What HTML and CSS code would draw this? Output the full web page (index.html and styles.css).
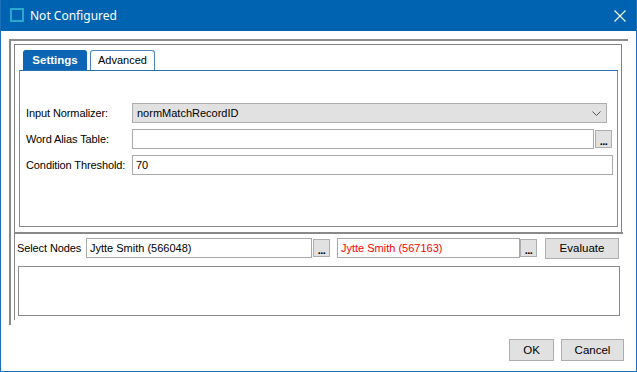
FILE: index.html
```html
<!DOCTYPE html>
<html>
<head>
  <title>Not Configured</title>
  <link rel="stylesheet" href="styles.css">
</head>
<body>
  <div class="window">
    <div class="titlebar">
      <span class="app-icon"></span>
      <span class="title">Not Configured</span>
      <svg class="close-btn" width="12" height="12" viewBox="0 0 12 12">
        <path d="M0.5 0.5 L11.5 11.5 M11.5 0.5 L0.5 11.5" stroke="#fff" stroke-width="1.1" fill="none"/>
      </svg>
    </div>

    <div class="client">
      <div class="frame-outer">
        <div class="frame-inner">
          <div class="upper-pane">
            <div class="tabs">
              <div class="tab active">Settings</div>
              <div class="tab">Advanced</div>
            </div>
            <div class="tab-panel">
              <div class="form-row">
                <label>Input Normalizer:</label>
                <div class="combo">
                  <span>normMatchRecordID</span>
                  <svg class="chevron" width="9" height="5" viewBox="0 0 9 5">
                    <path d="M0.5 0.5 L4.5 4.5 L8.5 0.5" stroke="#555" stroke-width="1" fill="none"/>
                  </svg>
                </div>
              </div>
              <div class="form-row">
                <label>Word Alias Table:</label>
                <div class="text-box alias-box"></div>
                <div class="dots-btn">...</div>
              </div>
              <div class="form-row">
                <label>Condition Threshold:</label>
                <div class="text-box threshold-box">70</div>
              </div>
            </div>
          </div>

          <div class="lower-pane">
            <div class="nodes-row">
              <label class="nodes-label">Select Nodes</label>
              <div class="text-box node-box first">Jytte Smith (566048)</div>
              <div class="dots-btn">...</div>
              <div class="text-box node-box second red">Jytte Smith (567163)</div>
              <div class="dots-btn tight">...</div>
              <div class="button evaluate-btn">Evaluate</div>
            </div>
            <div class="output-box"></div>
          </div>
        </div>
      </div>

      <div class="dialog-buttons">
        <div class="button ok-btn">OK</div>
        <div class="button cancel-btn">Cancel</div>
      </div>
    </div>
  </div>
</body>
</html>
```

FILE: styles.css
```css
body {
  margin: 0;
  padding: 0;
  font-family: 'Liberation Sans', Arial, sans-serif;
  font-size: 11px;
  color: #000;
}

.window {
  width: 637px;
  height: 372px;
  box-sizing: border-box;
  border: 1px solid #1c6fb8;
  border-top: none;
  background: white;
  display: flex;
  flex-direction: column;
}

.titlebar {
  height: 31px;
  flex-shrink: 0;
  background: #0063b1;
  display: flex;
  align-items: center;
  padding-left: 9px;
  color: white;
}

.app-icon {
  width: 14px;
  height: 14px;
  box-sizing: border-box;
  border: 2px solid #2aa9cf;
  margin-top: -1px;
}

.title {
  font-family: 'Noto Sans', sans-serif;
  font-size: 12px;
  margin-left: 6px;
}

.close-btn {
  margin-left: auto;
  margin-right: 10px;
}

.client {
  flex: 1;
  padding: 8px 11px 0 8px;
  display: flex;
  flex-direction: column;
}

.frame-outer {
  width: 619px;
  height: 286px;
  box-sizing: border-box;
  border-top: 2px solid #8e8e8e;
  border-left: 2px solid #8a8a8a;
  padding: 3px 0 0 3px;
}

.frame-inner {
  width: 608px;
  height: 276px;
  display: flex;
  flex-direction: column;
}

/* upper part: tab control */
.upper-pane {
  height: 188px;
  box-sizing: border-box;
  border: 1px solid #828282;
  border-bottom: none;
  padding: 5px 3px 0 4px;
}

.tabs {
  display: flex;
  height: 20px;
  padding-left: 4px;
  gap: 3px;
}

.tab {
  box-sizing: border-box;
  height: 20px;
  width: 65px;
  text-align: center;
  line-height: 18px;
  font-size: 11px;
  border: 1px solid #4a84b8;
  border-bottom: none;
  border-radius: 3px 3px 0 0;
  background: white;
}

.tab.active {
  background: #0c66b5;
  border-color: #0c66b5;
  color: white;
  font-weight: bold;
  font-size: 11.5px;
  width: 64px;
}

.tab-panel {
  height: 157px;
  box-sizing: border-box;
  border: 1px solid #8a8a8a;
  border-top: 1px solid #2c6fae;
  padding: 32px 0 0 6px;
  display: flex;
  flex-direction: column;
  gap: 6px;
}

.form-row {
  display: flex;
  align-items: center;
  height: 20px;
}

.form-row label {
  width: 106px;
  flex-shrink: 0;
  letter-spacing: -0.1px;
}

.combo {
  width: 475px;
  height: 20px;
  box-sizing: border-box;
  background: #e1e1e1;
  border: 1px solid #adadad;
  display: flex;
  align-items: center;
  padding: 0 5px 0 4px;
}

.chevron {
  margin-left: auto;
}

.text-box {
  height: 20px;
  box-sizing: border-box;
  border: 1px solid #a9a9a9;
  background: white;
  padding-left: 3px;
  line-height: 18px;
}

.alias-box {
  width: 462px;
}

.threshold-box {
  width: 481px;
}

.dots-btn {
  width: 17px;
  height: 18px;
  box-sizing: border-box;
  margin-left: 1px;
  background: #e1e1e1;
  border: 1px solid #adadad;
  font-weight: bold;
  text-align: center;
  line-height: 20px;
  font-size: 11px;
  letter-spacing: -0.5px;
}

/* lower part: node selection */
.lower-pane {
  flex: 1;
  border-top: 2px solid #8a8a8a;
  border-left: 1px solid #8a8a8a;
  margin-right: -1px;
  padding: 4px 0 0 2px;
}

.nodes-row {
  display: flex;
  align-items: flex-start;
  height: 21px;
}

.nodes-label {
  width: 69px;
  line-height: 20px;
  letter-spacing: -0.1px;
}

.node-box {
  height: 20px;
}

.node-box.first {
  width: 226px;
}

.node-box.second {
  width: 183px;
  margin-left: 7px;
}

.nodes-row .dots-btn {
  margin-top: 1px;
  margin-left: 1px;
}

.nodes-row .dots-btn.tight {
  margin-left: 0;
}

.red {
  color: #ff0000;
}

.button {
  box-sizing: border-box;
  height: 21px;
  background: #e1e1e1;
  border: 1px solid #adadad;
  text-align: center;
  line-height: 19px;
  font-size: 11.5px;
}

.evaluate-btn {
  width: 74px;
  margin-left: 8px;
}

.output-box {
  width: 602px;
  height: 50px;
  box-sizing: border-box;
  margin: 7px 0 0 1px;
  border: 1px solid #8a8a8a;
}

.dialog-buttons {
  display: flex;
  justify-content: flex-end;
  gap: 7px;
  margin-top: 14px;
  margin-right: 1px;
}

.dialog-buttons .button {
  height: 22px;
  line-height: 20px;
}

.ok-btn {
  width: 45px;
}

.cancel-btn {
  width: 63px;
}
```
